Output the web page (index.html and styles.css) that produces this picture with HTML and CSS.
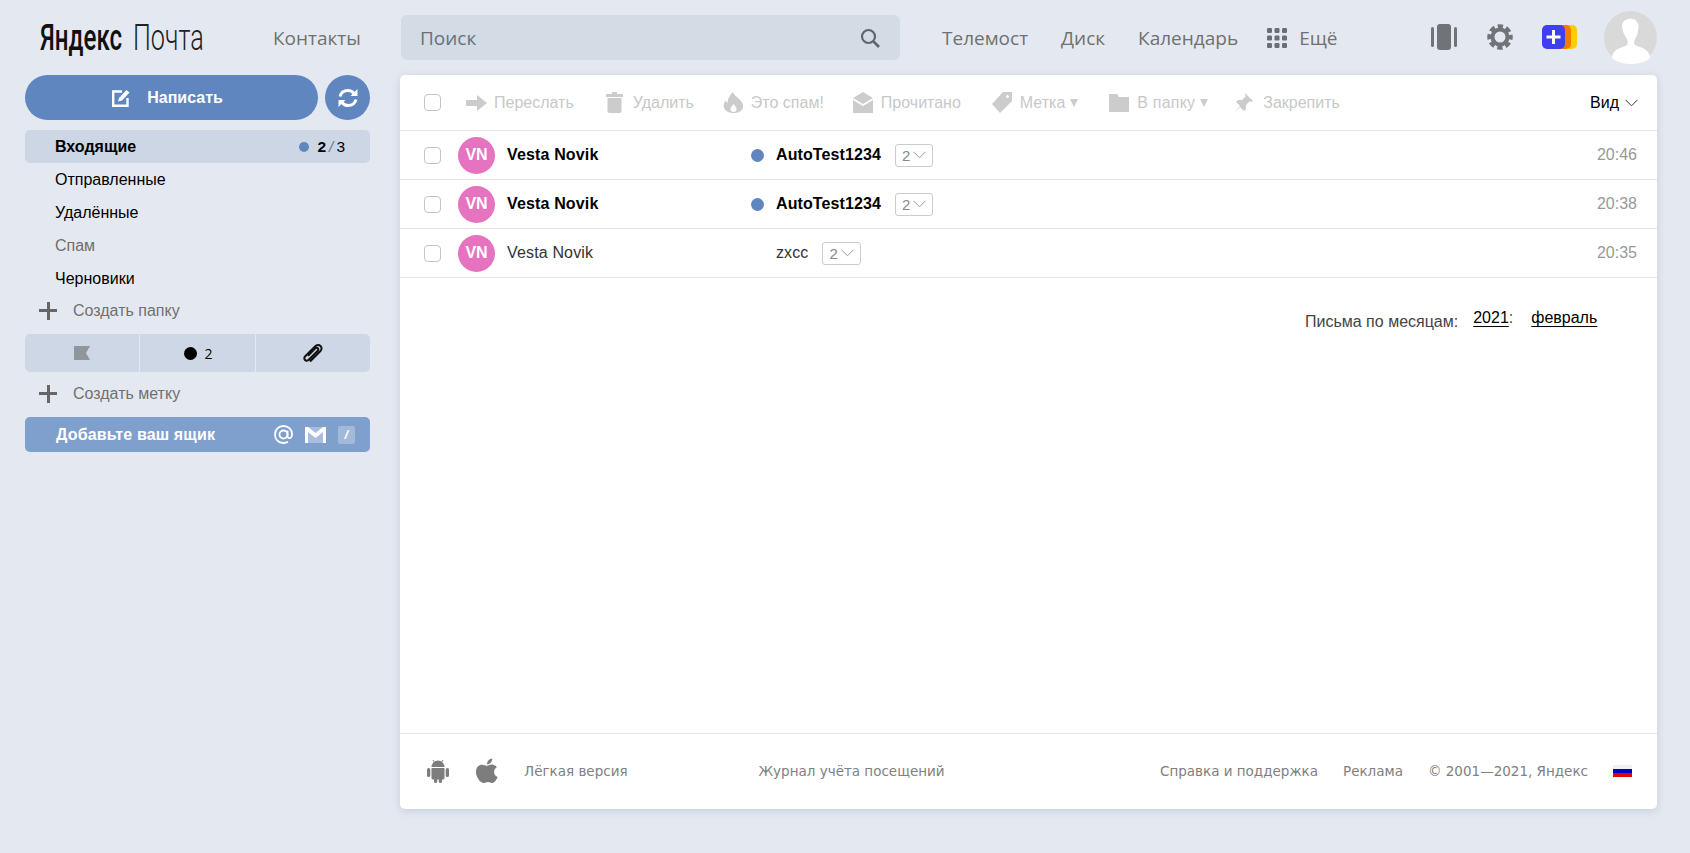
FILE: index.html
```html
<!DOCTYPE html>
<html lang="ru">
<head>
<meta charset="UTF-8" />
<title>Яндекс.Почта</title>
<link rel="stylesheet" href="styles.css">
</head>
<body>

<header class="topbar">
  <div class="logo"><span class="logo-ya">Яндекс</span><span class="logo-mail">Почта</span></div>
  <a class="top-link contacts">Контакты</a>
  <div class="search">
    <span>Поиск</span>
    <svg width="22" height="22" viewBox="0 0 22 22"><circle cx="9.5" cy="9.5" r="6.5" fill="none" stroke="#5d6670" stroke-width="2.2"/><path d="M14.5 14.5l5.5 5.5" stroke="#5d6670" stroke-width="2.6"/></svg>
  </div>
  <nav class="top-nav">
    <a class="top-link">Телемост</a>
    <a class="top-link">Диск</a>
    <a class="top-link">Календарь</a>
    <a class="top-link more">
      <svg width="20" height="20" viewBox="0 0 20 20" fill="#6b6f72">
        <rect x="0" y="0" width="5" height="5" rx="1.2"/><rect x="7.5" y="0" width="5" height="5" rx="1.2"/><rect x="15" y="0" width="5" height="5" rx="1.2"/>
        <rect x="0" y="7.5" width="5" height="5" rx="1.2"/><rect x="7.5" y="7.5" width="5" height="5" rx="1.2"/><rect x="15" y="7.5" width="5" height="5" rx="1.2"/>
        <rect x="0" y="15" width="5" height="5" rx="1.2"/><rect x="7.5" y="15" width="5" height="5" rx="1.2"/><rect x="15" y="15" width="5" height="5" rx="1.2"/>
      </svg>
      Ещё
    </a>
  </nav>
  <div class="top-icons">
    <svg class="ic-meet" width="26" height="26" viewBox="0 0 26 26" fill="#707478"><rect x="6" y="0" width="14" height="26" rx="3"/><rect x="0" y="3" width="3" height="20" rx="1.5"/><rect x="23" y="3" width="3" height="20" rx="1.5"/></svg>
    <svg class="ic-gear" width="26" height="26" viewBox="0 0 26 26"><circle cx="13" cy="13" r="7.5" fill="none" stroke="#707478" stroke-width="4"/><circle cx="13" cy="13" r="10.5" fill="none" stroke="#707478" stroke-width="4.5" stroke-dasharray="5.2 3.05" stroke-dashoffset="2.6"/></svg>
    <svg class="ic-plus" width="35" height="24" viewBox="0 0 35 24"><rect x="14" y="0" width="21" height="24" rx="5" fill="#fc0"/><rect x="8" y="0" width="21" height="24" rx="5" fill="#f57a00"/><rect x="0" y="0" width="23" height="24" rx="5" fill="#3f3ff2"/><path d="M11.5 5v14M4.5 12h14" stroke="#fff" stroke-width="3"/></svg>
    <svg class="avatar-user" width="53" height="53" viewBox="0 0 53 53">
      <circle cx="26.5" cy="26.5" r="26.5" fill="#d9d9d9"/>
      <path d="M18 14c1-5 6-7 11-6 2 0 3 1 4 3 2 2 2 5 1 8 0 3-1 6-3 9-1 2-1 4 0 6 4 2 10 3 13 7 1 2 2 4 2 6-5 4-12 6-19 6s-14-2-19-6c0-3 1-5 3-7 3-3 9-4 12-6 1-2 1-4 0-6-3-4-5-9-5-14z" fill="#fff"/>
    </svg>
  </div>
</header>

<div class="layout">
  <aside class="sidebar">
    <div class="compose-row">
      <a class="compose">
        <svg width="19" height="18" viewBox="0 0 19 18"><path d="M10 2.500H1.200v14.300h14.300V9" fill="none" stroke="#fff" stroke-width="2.400"/><path d="M6 12.500l1-3.500 7.500-8 3 2.500-7.500 8z" fill="#fff"/></svg>
        Написать
      </a>
      <a class="refresh">
        <svg width="22" height="22" viewBox="0 0 22 22" fill="none" stroke="#fff" stroke-width="3">
          <path d="M3 9.5C4 5.5 7 3.5 11 3.5c2.5 0 4.500 1 6 3"/>
          <path d="M19 12.500c-1 4-4 6-8 6-2.500 0-4.500-1-6-3"/>
          <path d="M20.500 2v7h-7z" fill="#fff" stroke="none"/>
          <path d="M1.500 20v-7h7z" fill="#fff" stroke="none"/>
        </svg>
      </a>
    </div>

    <ul class="folders">
      <li class="folder active">
        <span>Входящие</span>
        <span class="counter"><i class="dot"></i><b>2</b><em>/</em>3</span>
      </li>
      <li class="folder">Отправленные</li>
      <li class="folder">Удалённые</li>
      <li class="folder muted">Спам</li>
      <li class="folder">Черновики</li>
    </ul>

    <a class="create"><span class="plus"></span>Создать папку</a>

    <div class="tags">
      <div class="tag">
        <svg width="16" height="14" viewBox="0 0 16 14"><path d="M0 0h16l-4 7 4 7H0z" fill="#90959e"/></svg>
      </div>
      <div class="tag tag-unread"><i></i>2</div>
      <div class="tag">
        <svg width="22" height="22" viewBox="0 0 22 22" fill="none" stroke="#111" stroke-width="2"><path d="M8 19.500l10-10c2-2 2-4 .5-5.500S15 2.500 13 4.500L3.500 14c-1.500 1.500-1.500 3 -.5 4s2.500 1 4-.5l8.500-8.500c1-1 1-2 .3-2.700s-1.700-.7-2.700.3L6 13.800"/></svg>
      </div>
    </div>

    <a class="create create-tag"><span class="plus"></span>Создать метку</a>

    <div class="add-box">
      <span>Добавьте ваш ящик</span>
      <div class="add-icons">
        <svg width="19" height="19" viewBox="0 0 19 19" fill="none" stroke="#fff" stroke-width="1.800"><circle cx="9.500" cy="9.500" r="4"/><path d="M13.500 5.500v5.500c0 3 4.500 3 4.600-1.500C18.100 4.500 14.500 1 9.500 1 4.500 1 1 4.500 1 9.500s3.500 8.500 8.500 8.500c1.800 0 3.200-.4 4.500-1.200"/></svg>
        <svg width="21" height="16" viewBox="0 0 21 16"><rect x="0" y="0" width="21" height="16" fill="#a9bddc"/><path d="M0 0h3l7.500 6L18 0h3v16h-3V5l-7.500 6L3 5v11H0z" fill="#fff"/></svg>
        <span class="slash-tile">/</span>
      </div>
    </div>
  </aside>

  <main class="panel">
    <div class="toolbar">
      <span class="check"></span>
      <a class="tool t-fwd">
        <svg width="21" height="16" viewBox="0 0 21 16" fill="#ccc"><path d="M0 5h11V0l10 8-10 8v-5H0z"/></svg>Переслать
      </a>
      <a class="tool t-del">
        <svg width="17" height="21" viewBox="0 0 17 21" fill="#ccc"><path d="M6 0h5v2h6v3H0V2h6zM1.500 6h14v13c0 1-1 2-2 2h-10c-1 0-2-1-2-2z"/></svg>Удалить
      </a>
      <a class="tool t-spam">
        <svg width="21" height="21" viewBox="0 0 21 21" fill="#ccc"><path fill-rule="evenodd" d="M10 0c1 4 5 5 8 9 3 4 3 8-1 10.500-2 1.200-4 1.500-6.500 1.500s-5-.5-7-2C0 16.500 0 12 2.500 8.500c.5 1 1 2 2 2.500C4.500 7 6.500 3 10 0zm.5 12c-1.500 2-3 3-3 5 0 1.800 1.300 3 3 3s3-1.200 3-3c0-2-1.500-3-3-5z"/></svg>Это спам!
      </a>
      <a class="tool t-read">
        <svg width="20" height="21" viewBox="0 0 20 21" fill="#ccc"><path d="M10 0l10 6-10 6L0 6zM0 8l10 6 10-6v13H0z"/></svg>Прочитано
      </a>
      <a class="tool t-label">
        <svg width="20" height="21" viewBox="0 0 20 21" fill="#ccc"><path fill-rule="evenodd" d="M11 0h9v9L8 21 0 12zm4.500 3a1.500 1.500 0 100 3 1.500 1.500 0 000-3z"/></svg>Метка<i class="tri"></i>
      </a>
      <a class="tool t-folder">
        <svg width="20" height="18" viewBox="0 0 20 18" fill="#ccc"><path d="M0 0h8l2 3h10v15H0z"/></svg>В папку<i class="tri"></i>
      </a>
      <a class="tool t-pin">
        <svg width="20" height="20" viewBox="0 0 20 20" fill="#ccc"><path d="M12 0l8 8-2 1-1-1-4 4 0 4-2 2-4-4-6 6 6-7-4-4 2-2h4l4-4-1-1z"/></svg>Закрепить
      </a>
      <a class="view">Вид<svg width="13" height="8" viewBox="0 0 13 8" fill="none" stroke="#333" stroke-width="1"><path d="M.5.800l6 6 6-6"/></svg></a>
    </div>

    <div class="row unread">
      <span class="check"></span>
      <span class="ava">VN</span>
      <span class="from">Vesta Novik</span>
      <span class="mark"><i class="dot"></i></span>
      <span class="subject">AutoTest1234</span>
      <span class="thread">2<svg width="13" height="8" viewBox="0 0 13 8" fill="none" stroke="#999" stroke-width="1"><path d="M.5.800l6 6 6-6"/></svg></span>
      <span class="time">20:46</span>
    </div>
    <div class="row unread">
      <span class="check"></span>
      <span class="ava">VN</span>
      <span class="from">Vesta Novik</span>
      <span class="mark"><i class="dot"></i></span>
      <span class="subject">AutoTest1234</span>
      <span class="thread">2<svg width="13" height="8" viewBox="0 0 13 8" fill="none" stroke="#999" stroke-width="1"><path d="M.5.800l6 6 6-6"/></svg></span>
      <span class="time">20:38</span>
    </div>
    <div class="row">
      <span class="check"></span>
      <span class="ava">VN</span>
      <span class="from">Vesta Novik</span>
      <span class="mark"></span>
      <span class="subject">zxcc</span>
      <span class="thread">2<svg width="13" height="8" viewBox="0 0 13 8" fill="none" stroke="#999" stroke-width="1"><path d="M.5.800l6 6 6-6"/></svg></span>
      <span class="time">20:35</span>
    </div>

    <div class="months">
      <span class="months-label">Письма по месяцам:</span>
      <span class="months-year"><a>2021</a>:</span>
      <a class="months-name">февраль</a>
    </div>

    <footer class="footer">
      <svg class="f-android" width="22" height="24" viewBox="0 0 22 24" fill="#7d7d7d">
        <path d="M4.500 8a6.500 6.500 0 0113 0z"/><path d="M6 1l2 3M16 1l-2 3" stroke="#7d7d7d" stroke-width="1"/>
        <path d="M4.500 9h13v10a1.500 1.500 0 01-1.500 1.500h-10A1.500 1.500 0 014.500 19z"/>
        <rect x="0" y="9" width="3.300" height="9" rx="1.600"/><rect x="18.700" y="9" width="3.300" height="9" rx="1.600"/>
        <rect x="7" y="18" width="3.200" height="6" rx="1.600"/><rect x="11.800" y="18" width="3.200" height="6" rx="1.600"/>
      </svg>
      <svg class="f-apple" width="22" height="26" viewBox="0 0 23 26" fill="#7d7d7d">
        <path d="M17 0c.2 3-2.300 6-5.500 6C11.300 3 14 .3 17 0z"/>
        <path d="M11.500 7.500c1.500 0 3-1.200 5.200-1.200 1.800 0 3.900 1 5.100 2.800-4.300 2.600-3.600 8.500.9 10.300-1.300 3-3.300 6.100-5.500 6.100-1.800 0-2.500-1.100-4.600-1.100s-2.900 1.100-4.600 1.100C4.700 25.500 0 19.500 0 14 0 9 3.200 6.400 6.300 6.400c2.200 0 3.800 1.100 5.200 1.100z"/>
      </svg>
      <a class="f-lite">Лёгкая версия</a>
      <a class="f-journal">Журнал учёта посещений</a>
      <a class="f-help">Справка и поддержка</a>
      <a class="f-ads">Реклама</a>
      <span class="f-copy">© 2001—2021, Яндекс</span>
      <span class="flag"></span>
    </footer>
  </main>
</div>

</body>
</html>
```

FILE: styles.css
```css
:root {
  --bg: #e4e9f1;
  --blue: #5f86bf;
  --active: #ccd6e5;
  --line: #e5e5e5;
  --grey: #707070;
}

* {
  box-sizing: border-box;
}

html, body {
  height: 100%;
}

body {
  margin: 0;
  background-color: var(--bg);
  color: #000;
  font-family: 'Liberation Sans', Arial, sans-serif;
  font-size: 16px;
  overflow: hidden;
}

/* top bar */
.topbar {
  height: 75px;
  display: flex;
  align-items: center;
  padding-left: 40px;
}

.logo {
  width: 233px;
  height: 40px;
  display: flex;
  align-items: center;
  color: #111;
  font-family: Roboto, 'Liberation Sans', sans-serif;
  font-size: 36px;
  white-space: nowrap;
}

.logo-ya {
  width: 93px;
  display: inline-block;
  transform: scaleX(0.67);
  transform-origin: left center;
  font-weight: 500;
}

.logo-mail {
  display: inline-block;
  transform: scaleX(0.7);
  transform-origin: left center;
  font-weight: 300;
  color: #222;
}

.top-link {
  color: var(--grey);
  font-family: 'Open Sans', sans-serif;
  font-size: 19px;
  white-space: nowrap;
}

.contacts {
  width: 128px;
}

.search {
  width: 499px;
  height: 45px;
  padding: 0 19px;
  display: flex;
  justify-content: space-between;
  align-items: center;
  background-color: #d3dbe5;
  border-radius: 6px;
  color: #69707a;
  font-family: 'Open Sans', sans-serif;
  font-size: 19px;
}

.top-nav {
  margin-left: 42px;
  display: flex;
  align-items: center;
  gap: 33px;
}

.more {
  margin-left: -4px;
  display: flex;
  align-items: center;
  gap: 12px;
}

.top-icons {
  margin-left: auto;
  margin-right: 33px;
  margin-top: -1px;
  display: flex;
  align-items: center;
}

.ic-meet { margin-right: 30px; }
.ic-gear { margin-right: 29px; }
.ic-plus { margin-right: 27px; }

/* page columns */
.layout {
  display: flex;
  align-items: flex-start;
  gap: 30px;
  padding-left: 25px;
  padding-right: 33px;
}

.sidebar {
  width: 345px;
  flex-shrink: 0;
}

.compose-row {
  display: flex;
  justify-content: space-between;
}

.compose {
  width: 293px;
  height: 45px;
  display: flex;
  justify-content: center;
  align-items: center;
  gap: 16px;
  padding-right: 8px;
  background-color: var(--blue);
  border-radius: 23px;
  color: #fff;
  font-size: 16px;
  font-weight: 700;
}

.refresh {
  width: 45px;
  height: 45px;
  display: flex;
  justify-content: center;
  align-items: center;
  background-color: var(--blue);
  border-radius: 50%;
}

.folders {
  list-style: none;
  margin: 10px 0 0;
  padding: 0;
}

.folder {
  height: 33px;
  padding: 0 25px 0 30px;
  display: flex;
  justify-content: space-between;
  align-items: center;
  border-radius: 5px;
}

.folder.active {
  background-color: var(--active);
  font-weight: 700;
}

.folder.muted {
  color: #6e6e6e;
}

.counter {
  display: flex;
  align-items: center;
  font-size: 15.5px;
  font-weight: 400;
}

.counter .dot {
  margin-right: 8px;
  width: 10px;
  height: 10px;
}

.counter em {
  margin: 0 3px;
  color: #777;
}

.dot {
  display: block;
  width: 13px;
  height: 13px;
  background-color: var(--blue);
  border-radius: 50%;
}

.create {
  height: 33px;
  margin-top: -1px;
  padding-left: 14px;
  display: flex;
  align-items: center;
  color: var(--grey);
}

.plus {
  width: 18px;
  height: 18px;
  margin-right: 16px;
  background: linear-gradient(#666, #666) center / 100% 3px no-repeat,
              linear-gradient(#666, #666) center / 3px 100% no-repeat;
}

.tags {
  height: 38px;
  margin-top: 7px;
  display: grid;
  grid-template-columns: 114px 1fr 114px;
  gap: 1px;
  border-radius: 5px;
  overflow: hidden;
}

.tag {
  display: flex;
  justify-content: center;
  align-items: center;
  background-color: #ced7e5;
}

.tag-unread {
  gap: 7px;
  padding-left: 2px;
  font-family: 'Open Sans', sans-serif;
  font-size: 14px;
}

.tag-unread i {
  width: 13px;
  height: 13px;
  background-color: #000;
  border-radius: 50%;
}

.create-tag {
  margin-top: 5px;
}

.add-box {
  height: 35px;
  margin-top: 7px;
  padding: 0 15px 0 31px;
  display: flex;
  justify-content: space-between;
  align-items: center;
  background-color: #7f9fcd;
  border-radius: 5px;
  color: #fff;
  font-size: 16px;
  font-weight: 700;
  letter-spacing: 0.15px;
}

.add-icons {
  display: flex;
  align-items: center;
  gap: 12px;
}

.slash-tile {
  width: 17px;
  height: 18px;
  display: flex;
  justify-content: center;
  align-items: center;
  background-color: #a3b9da;
  border-radius: 2px;
  font-size: 13px;
  font-style: italic;
}

/* main panel */
.panel {
  flex: 1;
  height: 734px;
  display: flex;
  flex-direction: column;
  background-color: #fff;
  border-radius: 5px;
  box-shadow: 0 2px 10px rgba(90, 110, 150, 0.22);
}

.toolbar {
  height: 56px;
  flex-shrink: 0;
  padding: 0 19px 0 24px;
  display: flex;
  align-items: center;
  border-bottom: 1px solid var(--line);
}

.check {
  width: 17px;
  height: 17px;
  flex-shrink: 0;
  border: 1px solid #c4c4c4;
  border-radius: 4px;
}

.tool {
  display: flex;
  align-items: center;
  gap: 8px;
  color: #c8c8c8;
  white-space: nowrap;
}

.t-fwd { margin-left: 25px; gap: 7px; }
.t-del { margin-left: 32px; gap: 10px; }
.t-spam { margin-left: 29px; gap: 7px; }
.t-read { margin-left: 29px; }
.t-label { margin-left: 31px; }
.t-folder { margin-left: 31px; letter-spacing: 0.2px; }
.t-pin { margin-left: 25px; gap: 10px; }

.tri {
  width: 0;
  height: 0;
  margin-left: -3px;
  border-left: 4.5px solid transparent;
  border-right: 4.5px solid transparent;
  border-top: 8px solid #ccc;
}

.view {
  margin-left: auto;
  display: flex;
  align-items: center;
  gap: 6px;
}

.row {
  height: 49px;
  flex-shrink: 0;
  padding: 0 20px 0 24px;
  display: flex;
  align-items: center;
  border-bottom: 1px solid var(--line);
  color: #333;
}

.ava {
  width: 37px;
  height: 37px;
  margin-left: 17px;
  display: flex;
  justify-content: center;
  align-items: center;
  background-color: #e673c0;
  border-radius: 50%;
  color: #fff;
  font-size: 16px;
  font-weight: 700;
}

.from {
  width: 244px;
  margin-left: 12px;
  letter-spacing: 0.15px;
}

.mark {
  width: 25px;
}

.unread {
  color: #000;
  font-weight: 700;
}

.subject {
  margin-right: 14px;
  letter-spacing: 0.1px;
}

.thread {
  height: 23px;
  padding: 0 6px;
  display: flex;
  align-items: center;
  gap: 3px;
  border: 1px solid #ccc;
  border-radius: 3px;
  color: #888;
  font-size: 15px;
  font-weight: 400;
}

.time {
  margin-left: auto;
  color: #999;
  font-weight: 400;
}

.months {
  margin-top: 31px;
  padding-left: 905px;
  display: flex;
  align-items: flex-start;
  color: #444;
}

.months-label {
  margin-top: 4px;
}

.months a {
  color: #000;
  text-decoration: underline;
  text-underline-offset: 3px;
}

.months-year {
  margin-left: 15px;
}

.months-name {
  margin-left: 18px;
}

.footer {
  margin-top: auto;
  height: 76px;
  padding: 0 25px 1px 27px;
  display: flex;
  align-items: center;
  border-top: 1px solid var(--line);
  color: #808080;
  font-family: 'DejaVu Sans', sans-serif;
  font-size: 13.5px;
}

.f-apple { margin-left: 27px; }
.f-lite { margin-left: 26px; }
.f-journal { margin-left: 131px; }
.f-help { margin-left: auto; }
.f-ads { margin-left: 25px; }
.f-copy { margin-left: 25px; }

.flag {
  width: 19px;
  height: 12px;
  margin-left: 25px;
  background: linear-gradient(#f0f0f4 0 33%, #0000cc 33% 66%, #e60000 66%);
}
```
